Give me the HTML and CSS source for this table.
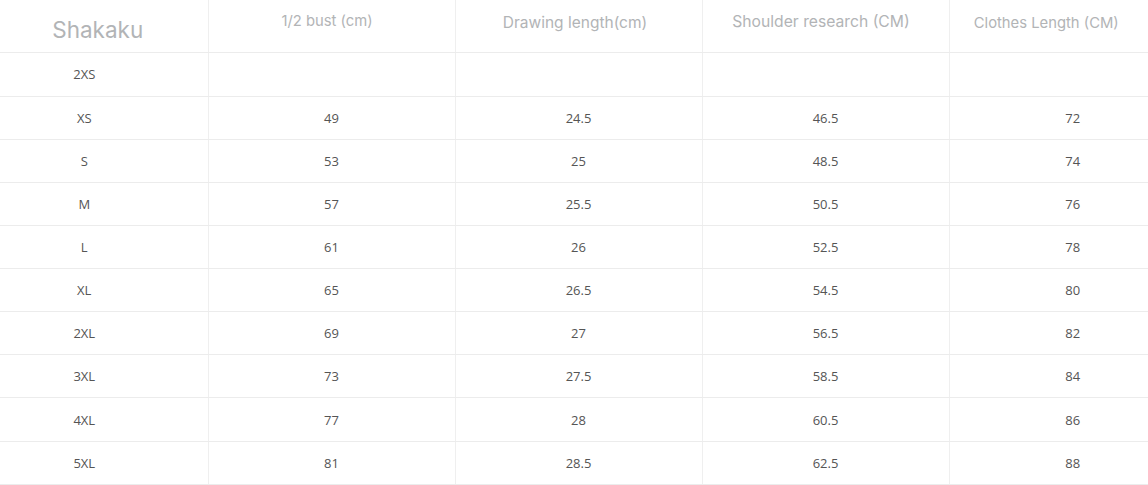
FILE: index.html
```html
<!DOCTYPE html>
<html>
<head>
<meta charset="utf-8">
<link rel="stylesheet" href="styles.css">
</head>
<body>
<table class="size-table">
  <colgroup>
    <col class="col"><col class="col"><col class="col"><col class="col"><col class="col">
  </colgroup>
  <thead>
    <tr class="head-row">
      <th class="h h-size">Shakaku</th>
      <th class="h h-bust">1/2 bust (cm)</th>
      <th class="h h-draw">Drawing length(cm)</th>
      <th class="h h-shoulder">Shoulder research (CM)</th>
      <th class="h h-length">Clothes Length (CM)</th>
    </tr>
  </thead>
  <tbody>
    <tr class="first"><td>2XS</td><td></td><td></td><td></td><td></td></tr>
    <tr><td>XS</td><td>49</td><td>24.5</td><td>46.5</td><td>72</td></tr>
    <tr><td>S</td><td>53</td><td>25</td><td>48.5</td><td>74</td></tr>
    <tr><td>M</td><td>57</td><td>25.5</td><td>50.5</td><td>76</td></tr>
    <tr><td>L</td><td>61</td><td>26</td><td>52.5</td><td>78</td></tr>
    <tr><td>XL</td><td>65</td><td>26.5</td><td>54.5</td><td>80</td></tr>
    <tr><td>2XL</td><td>69</td><td>27</td><td>56.5</td><td>82</td></tr>
    <tr><td>3XL</td><td>73</td><td>27.5</td><td>58.5</td><td>84</td></tr>
    <tr><td>4XL</td><td>77</td><td>28</td><td>60.5</td><td>86</td></tr>
    <tr><td>5XL</td><td>81</td><td>28.5</td><td>62.5</td><td>88</td></tr>
  </tbody>
</table>
</body>
</html>
```
FILE: styles.css
```css
html, body {
  margin: 0;
  padding: 0;
  background: #ffffff;
  overflow: hidden;
}

.size-table {
  margin-left: -39px;
  width: 1235px;
  table-layout: fixed;
  border-collapse: collapse;
  font-family: "Open Sans", "Noto Sans", sans-serif;
}

.col {
  width: 247px;
}

.size-table th,
.size-table td {
  border-left: 1px solid #efefef;
  border-bottom: 1px solid #ececec;
  padding: 0;
  text-align: center;
}

.size-table th:first-child,
.size-table td:first-child {
  border-left: none;
}

.head-row th {
  height: 52px;
  vertical-align: top;
  font-family: "Inter", "Noto Sans", sans-serif;
  font-weight: 400;
  color: #b2b4b6;
  box-sizing: border-box;
}

.h-size {
  font-size: 22.5px;
  line-height: 26px;
  padding-top: 17px !important;
  padding-left: 27px !important;
  color: #a2a7aa;
}

.h-bust {
  font-size: 14.8px;
  line-height: 18px;
  padding-top: 12px !important;
  padding-right: 9px !important;
}

.h-draw {
  font-size: 15.5px;
  line-height: 18px;
  padding-top: 14px !important;
  padding-right: 7px !important;
}

.h-shoulder {
  font-size: 15.7px;
  line-height: 18px;
  padding-top: 13px !important;
  padding-right: 9px !important;
}

.h-length {
  font-size: 14.8px;
  line-height: 18px;
  padding-top: 14px !important;
  padding-right: 53px !important;
  color: #c0c2c4;
}

.size-table td {
  height: 42.15px;
  font-size: 13px;
  color: #555555;
  vertical-align: middle;
}

.size-table tr.first td {
  height: 43px;
}
```
